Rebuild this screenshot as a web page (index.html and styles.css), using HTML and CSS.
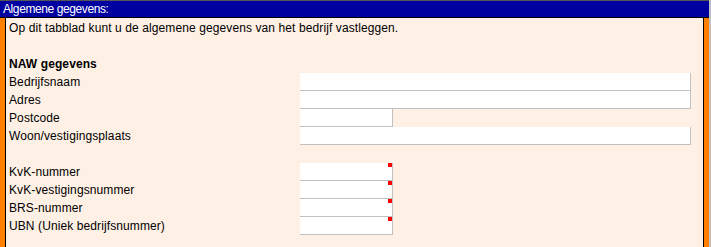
FILE: index.html
```html
<!DOCTYPE html>
<html>
<head>
<meta charset="utf-8">
<link rel="stylesheet" href="styles.css">
</head>
<body>
<div class="window">
  <div class="titlebar">Algemene gegevens:</div>
  <div class="frame">
    <div class="panel">
      <div class="intro">Op dit tabblad kunt u de algemene gegevens van het bedrijf vastleggen.</div>
      <div class="section">NAW gegevens</div>
      <div class="form">
        <div class="label">Bedrijfsnaam</div><div class="field wide"></div>
        <div class="label">Adres</div><div class="field wide"></div>
        <div class="label">Postcode</div><div class="field short"></div>
        <div class="label">Woon/vestigingsplaats</div><div class="field wide"></div>
        <div class="spacer"></div>
        <div class="label">KvK-nummer</div><div class="field short req"></div>
        <div class="label">KvK-vestigingsnummer</div><div class="field short req"></div>
        <div class="label">BRS-nummer</div><div class="field short req"></div>
        <div class="label">UBN (Uniek bedrijfsnummer)</div><div class="field short req"></div>
      </div>
    </div>
  </div>
</div>
</body>
</html>
```

FILE: styles.css
```css
html, body {
  margin: 0;
  padding: 0;
  height: 100%;
  background: #c0c0c0;
}
body {
  font-family: "Liberation Sans", Arial, sans-serif;
  font-size: 12px;
  letter-spacing: 0.1px;
  color: #000;
  overflow: hidden;
}
.window {
  width: 709px;
  height: 100%;
  border-top: 1px solid #555555;
  display: flex;
  flex-direction: column;
}
.titlebar {
  height: 16px;
  line-height: 16px;
  background: #0000a0;
  color: #ffffff;
  font-size: 12px;
  letter-spacing: -0.4px;
  padding-left: 3px;
  border-bottom: 1px solid #000000;
  box-sizing: content-box;
}
.frame {
  flex: 1;
  background: #ff8000;
  padding: 0 5px;
  display: flex;
}
.panel {
  flex: 1;
  background: #fff0e5;
  border-left: 1px solid #000;
  border-right: 1px solid #000;
  padding: 1px 0 0 3px;
}
.intro {
  height: 18px;
  line-height: 18px;
  margin-bottom: 18px;
}
.section {
  height: 18px;
  line-height: 18px;
  font-weight: bold;
}
.form {
  display: grid;
  grid-template-columns: 291px auto;
  grid-auto-rows: 18px;
  justify-items: start;
}
.label {
  line-height: 18px;
  white-space: nowrap;
}
.spacer {
  grid-column: 1 / span 2;
}
.field {
  position: relative;
  height: 18px;
  box-sizing: border-box;
  background: #ffffff;
  border-right: 1px solid #c0c0c0;
  border-bottom: 1px solid #c0c0c0;
}
.wide { width: 391px; }
.short { width: 93px; }
.req::after {
  content: "";
  position: absolute;
  top: 0;
  right: 0;
  width: 4px;
  height: 4px;
  background: #ff0000;
}
```
